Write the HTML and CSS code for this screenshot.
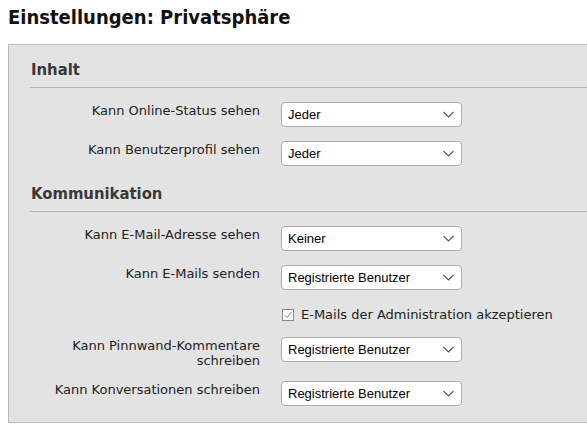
FILE: index.html
```html
<!DOCTYPE html>
<html lang="de">
<head>
<meta charset="utf-8">
<title>Einstellungen: Privatsphäre</title>
<link rel="stylesheet" href="styles.css">
</head>
<body>
<h1 class="page-title">Einstellungen: Privatsphäre</h1>
<div class="panel">
  <section class="group">
    <h2 class="group-title">Inhalt</h2>
    <div class="row">
      <label class="row-label" for="s1">Kann Online-Status sehen</label>
      <select class="sel" id="s1"><option>Jeder</option></select>
    </div>
    <div class="row">
      <label class="row-label" for="s2">Kann Benutzerprofil sehen</label>
      <select class="sel" id="s2"><option>Jeder</option></select>
    </div>
  </section>
  <section class="group group-next">
    <h2 class="group-title">Kommunikation</h2>
    <div class="row">
      <label class="row-label" for="s3">Kann E-Mail-Adresse sehen</label>
      <select class="sel" id="s3"><option>Keiner</option></select>
    </div>
    <div class="row">
      <label class="row-label" for="s4">Kann E-Mails senden</label>
      <select class="sel" id="s4"><option>Registrierte Benutzer</option></select>
    </div>
    <div class="row row-check">
      <span></span>
      <label class="check-label"><input type="checkbox" class="chk" checked> E-Mails der Administration akzeptieren</label>
    </div>
    <div class="row">
      <label class="row-label" for="s5">Kann Pinnwand-Kommentare schreiben</label>
      <select class="sel" id="s5"><option>Registrierte Benutzer</option></select>
    </div>
    <div class="row">
      <label class="row-label" for="s6">Kann Konversationen schreiben</label>
      <select class="sel" id="s6"><option>Registrierte Benutzer</option></select>
    </div>
  </section>
</div>
</body>
</html>
```
FILE: styles.css
```css
html, body {
  margin: 0;
  padding: 0;
  background: #fff;
  overflow: hidden;
}
body {
  font-family: "DejaVu Sans", Verdana, sans-serif;
  color: #222;
  width: 587px;
}
.page-title {
  margin: 0;
  padding: 4px 8px 0;
  height: 40px;
  box-sizing: border-box;
  font-family: "DejaVu Sans Condensed", "DejaVu Sans", sans-serif;
  font-weight: bold;
  font-size: 20px;
  line-height: 26px;
  color: #111;
}
.panel {
  margin-left: 8px;
  margin-top: 4px;
  width: 640px;
  box-sizing: border-box;
  border: 1px solid #b9b9b9;
  background: #e3e3e3;
  padding: 15px 0 16px 21px;
}
.group-title {
  margin: 0 0 14px;
  padding: 0 0 7px 1px;
  font-family: "DejaVu Sans Condensed", "DejaVu Sans", sans-serif;
  font-weight: bold;
  font-size: 16.5px;
  line-height: 20px;
  color: #383838;
  border-bottom: 1px solid #b5b5b5;
}
.group-next {
  margin-top: 18px;
}
.row {
  display: grid;
  grid-template-columns: 230px 181px;
  column-gap: 21px;
  align-items: start;
  margin-bottom: 14px;
}
.row:last-child {
  margin-bottom: 0;
}
.row-label {
  text-align: right;
  font-size: 13px;
  line-height: 15px;
  padding-top: 1px;
  margin-bottom: -1px;
  color: #222;
}
.sel {
  appearance: none;
  -webkit-appearance: none;
  width: 181px;
  height: 25px;
  box-sizing: border-box;
  margin: 0;
  border: 1px solid #acacac;
  border-radius: 4px;
  background-color: #fff;
  background-image: url("data:image/svg+xml,%3Csvg xmlns='http://www.w3.org/2000/svg' width='11' height='7' viewBox='0 0 11 7'%3E%3Cpath d='M0.5 1 L5.5 6 L10.5 1' fill='none' stroke='%23555' stroke-width='1.1'/%3E%3C/svg%3E");
  background-repeat: no-repeat;
  background-position: right 7px center;
  padding: 0 24px 0 6px;
  font-family: "Liberation Sans", Arial, sans-serif;
  font-size: 13px;
  color: #000;
}
.row-check {
  margin-top: 17px;
  margin-bottom: 14px;
}
.check-label {
  display: flex;
  align-items: center;
  gap: 7px;
  font-size: 13px;
  line-height: 16px;
  color: #222;
  white-space: nowrap;
}
.chk {
  appearance: none;
  -webkit-appearance: none;
  flex: none;
  display: block;
  width: 12px;
  height: 12px;
  margin: 0 0 0 1px;
  padding: 0;
  box-sizing: border-box;
  border: 1px solid #8a8a8a;
  background: #fff url("data:image/svg+xml,%3Csvg xmlns='http://www.w3.org/2000/svg' width='10' height='10' viewBox='0 0 10 10'%3E%3Cpath d='M1.5 5 L4 7.5 L8.5 2' fill='none' stroke='%23708aa8' stroke-width='1'/%3E%3C/svg%3E") no-repeat center;
}
```
